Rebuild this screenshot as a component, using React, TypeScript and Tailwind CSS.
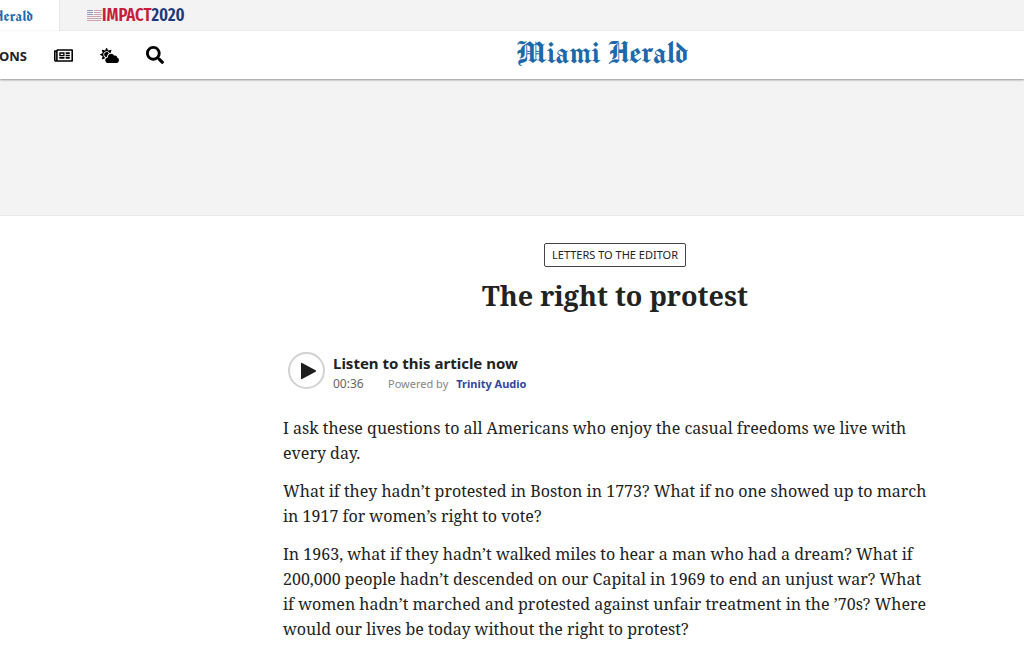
import React from "react";
import { FaCloudSun, FaRegNewspaper, FaSearch } from "react-icons/fa";

const PARAGRAPHS = [
  "I ask these questions to all Americans who enjoy the casual freedoms we live with every day.",
  "What if they hadn’t protested in Boston in 1773? What if no one showed up to march in 1917 for women’s right to vote?",
  "In 1963, what if they hadn’t walked miles to hear a man who had a dream? What if 200,000 people hadn’t descended on our Capital in 1969 to end an unjust war? What if women hadn’t marched and protested against unfair treatment in the ’70s? Where would our lives be today without the right to protest?",
];

const FlagIcon = () => (
  <svg width="15" height="11" viewBox="0 0 15 11" fill="none" aria-hidden="true">
    <path d="M0 .5h6M0 2.5h6M0 4.5h6" stroke="#8f97b5" />
    <path d="M7 .5h8M7 2.5h7M7 4.5h8M0 6.5h14M0 8.5h15M0 10.5h14" stroke="#c9a3ae" />
  </svg>
);

const TopBar = () => (
  <div className="flex h-[31px] bg-[#f3f3f3]">
    <a
      href="#herald"
      className="flex w-[60px] items-center justify-end overflow-hidden border-r border-[#e8e8e8] bg-white pr-[26px] font-['Manufacturing_Consent','UnifrakturCook','Liberation_Serif',serif] text-[17px] leading-none whitespace-nowrap text-[#1b69ab]"
    >
      Miami Herald
    </a>
    <a
      href="#impact2020"
      className="ml-[27px] flex items-center font-['Fira_Sans_Extra_Condensed','Open_Sans_Condensed','Liberation_Sans',sans-serif] text-[18px] font-semibold text-[#c41f3a]"
    >
      <FlagIcon />
      <span>
        IMPACT<span className="text-[#1a3a7c]">2020</span>
      </span>
    </a>
  </div>
);

const Header = () => (
  <header className="relative flex h-[48px] items-center bg-white text-black shadow-[0_1px_2px_rgba(0,0,0,0.4)]">
    <nav className="flex w-[180px] shrink-0 items-center">
      <div className="flex w-[27px] justify-end overflow-hidden pt-[3px]">
        <button className="text-[13px] font-bold text-[#222]">SECTIONS</button>
      </div>
      <a href="#edition" aria-label="E-edition" className="ml-[27px]">
        <FaRegNewspaper size={19} />
      </a>
      <a href="#weather" aria-label="Weather" className="ml-[27px]">
        <FaCloudSun size={19} />
      </a>
      <button aria-label="Search" className="ml-[27px]">
        <FaSearch size={18} />
      </button>
    </nav>
    <a
      href="#home"
      className="flex-1 pb-1 text-center font-['Manufacturing_Consent','UnifrakturCook','Liberation_Serif',serif] text-[34px] leading-none text-[#1b69ab]"
    >
      Miami Herald
    </a>
  </header>
);

const AudioPlayer = () => (
  <div className="mt-[36px] ml-[5px] flex items-start gap-2">
    <button
      aria-label="Play"
      className="flex size-[37px] items-center justify-center rounded-full border-2 border-[#d2d2d2] bg-white"
    >
      <svg width="17" height="18" viewBox="0 0 17 18" className="ml-1" fill="#1d1d1d">
        <path d="M1 1.6Q1 .4 2.100 1L15.600 8.200Q16.800 9 15.600 9.800L2.100 17Q1 17.600 1 16.400Z" />
      </svg>
    </button>
    <div>
      <p className="text-[15px] leading-[22px] font-bold text-[#222]">Listen to this article now</p>
      <div className="flex items-center text-[11px] leading-[20px] text-[#858585]">
        <span className="w-[55px] text-[12px] text-[#666]">00:36</span>
        <span>Powered by</span>
        <a href="#trinity" className="ml-2 font-bold text-[#35459b]">
          Trinity Audio
        </a>
      </div>
    </div>
  </div>
);

export default function App() {
  return (
    <div className="min-h-screen bg-white font-['Noto_Sans',sans-serif] text-[#222]">
      <TopBar />
      <Header />
      <div className="h-[136px] bg-[#f3f3f3]" />
      <main className="border-t border-[#e9e9e9] pt-[27px] pb-6 pl-[206px]">
        <article className="mx-auto flex max-w-[664px] flex-col">
          <a
            href="#letters"
            className="self-center rounded-xs border border-[#444] px-[7px] text-[11px] leading-[22px]"
          >
            LETTERS TO THE EDITOR
          </a>
          <h1 className="mt-[9px] text-center font-['Noto_Serif','DejaVu_Serif',serif] text-[27px] leading-[40px] font-bold">
            The right to protest
          </h1>
          <AudioPlayer />
          <div className="mt-[22px] max-w-[650px] space-y-[13px] font-['Noto_Serif','DejaVu_Serif',serif] text-[16px] leading-[25px]">
            {PARAGRAPHS.map((text) => (
              <p key={text}>{text}</p>
            ))}
          </div>
        </article>
      </main>
    </div>
  );
}
